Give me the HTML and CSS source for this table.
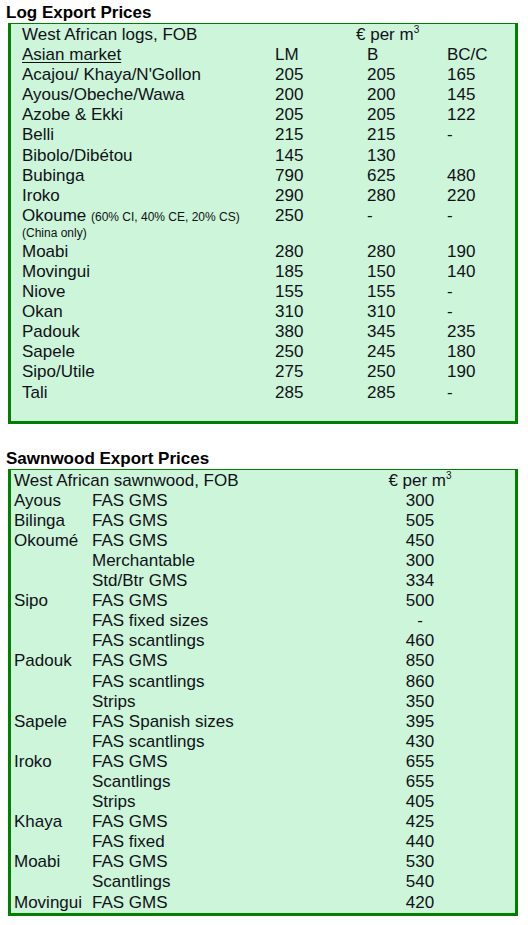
FILE: index.html
```html
<!DOCTYPE html>
<html>
<head>
<meta charset="utf-8">
<link rel="stylesheet" href="styles.css">
</head>
<body>
<h2 class="title">Log Export Prices</h2>
<div class="box logs">
  <div class="c1">West African logs, FOB</div><div class="unit">€ per m<sup>3</sup></div>
  <div class="c1 u">Asian market</div><div>LM</div><div>B</div><div>BC/C</div>
  <div class="c1">Acajou/ Khaya/N'Gollon</div><div>205</div><div>205</div><div>165</div>
  <div class="c1">Ayous/Obeche/Wawa</div><div>200</div><div>200</div><div>145</div>
  <div class="c1">Azobe &amp; Ekki</div><div>205</div><div>205</div><div>122</div>
  <div class="c1">Belli</div><div>215</div><div>215</div><div>-</div>
  <div class="c1">Bibolo/Dibétou</div><div>145</div><div>130</div><div></div>
  <div class="c1">Bubinga</div><div>790</div><div>625</div><div>480</div>
  <div class="c1">Iroko</div><div>290</div><div>280</div><div>220</div>
  <div class="c1 okoume">Okoume <span class="small">(60% CI, 40% CE, 20% CS)</span><span class="small block">(China only)</span></div><div>250</div><div>-</div><div>-</div>
  <div class="c1">Moabi</div><div>280</div><div>280</div><div>190</div>
  <div class="c1">Movingui</div><div>185</div><div>150</div><div>140</div>
  <div class="c1">Niove</div><div>155</div><div>155</div><div>-</div>
  <div class="c1">Okan</div><div>310</div><div>310</div><div>-</div>
  <div class="c1">Padouk</div><div>380</div><div>345</div><div>235</div>
  <div class="c1">Sapele</div><div>250</div><div>245</div><div>180</div>
  <div class="c1">Sipo/Utile</div><div>275</div><div>250</div><div>190</div>
  <div class="c1">Tali</div><div>285</div><div>285</div><div>-</div>
</div>

<h2 class="title second">Sawnwood Export Prices</h2>
<div class="box sawn">
  <div class="head">West African sawnwood, FOB</div><div class="p">€ per m<sup>3</sup></div>
  <div>Ayous</div><div>FAS GMS</div><div class="p">300</div>
  <div>Bilinga</div><div>FAS GMS</div><div class="p">505</div>
  <div>Okoumé</div><div>FAS GMS</div><div class="p">450</div>
  <div></div><div>Merchantable</div><div class="p">300</div>
  <div></div><div>Std/Btr GMS</div><div class="p">334</div>
  <div>Sipo</div><div>FAS GMS</div><div class="p">500</div>
  <div></div><div>FAS fixed sizes</div><div class="p">-</div>
  <div></div><div>FAS scantlings</div><div class="p">460</div>
  <div>Padouk</div><div>FAS GMS</div><div class="p">850</div>
  <div></div><div>FAS scantlings</div><div class="p">860</div>
  <div></div><div>Strips</div><div class="p">350</div>
  <div>Sapele</div><div>FAS Spanish sizes</div><div class="p">395</div>
  <div></div><div>FAS scantlings</div><div class="p">430</div>
  <div>Iroko</div><div>FAS GMS</div><div class="p">655</div>
  <div></div><div>Scantlings</div><div class="p">655</div>
  <div></div><div>Strips</div><div class="p">405</div>
  <div>Khaya</div><div>FAS GMS</div><div class="p">425</div>
  <div></div><div>FAS fixed</div><div class="p">440</div>
  <div>Moabi</div><div>FAS GMS</div><div class="p">530</div>
  <div></div><div>Scantlings</div><div class="p">540</div>
  <div>Movingui</div><div>FAS GMS</div><div class="p">420</div>
</div>
</body>
</html>
```

FILE: styles.css
```css
html, body {
  margin: 0;
  padding: 0;
  background: #ffffff;
}
body {
  font-family: "Liberation Sans", Arial, sans-serif;
  color: #111118;
  width: 528px;
}
.title {
  margin: 0;
  padding: 3px 0 0 6px;
  font-size: 17px;
  font-weight: bold;
  line-height: 20px;
  color: #000;
}
.title.second {
  margin-top: 22px;
}
.box {
  margin-left: 8px;
  width: 510px;
  box-sizing: border-box;
  background: #ccf5d9;
  border: 3px solid #008000;
  border-top-width: 1px;
  font-size: 17px;
  line-height: 20.1px;
  display: grid;
}
.logs {
  grid-template-columns: 253px 92px 80px 1fr;
  padding: 1px 0 18px 11px;
}
.logs .c1 {
  grid-column: 1;
}
.logs .unit {
  grid-column: 2 / 5;
  padding-left: 81px;
}
.u {
  text-decoration: underline;
  text-underline-offset: 2px;
}
.okoume {
  padding-bottom: 2px;
  line-height: 20px;
}
.small {
  font-size: 12px;
}
.block {
  display: block;
  line-height: 13px;
}
sup {
  font-size: 10px;
  line-height: 0;
  vertical-align: 7px;
}
.sawn {
  grid-template-columns: 78px 270px 116px;
  padding: 1px 0 0 3px;
}
.sawn .head {
  grid-column: 1 / 3;
}
.sawn .p {
  grid-column: 3;
  text-align: center;
}
```
